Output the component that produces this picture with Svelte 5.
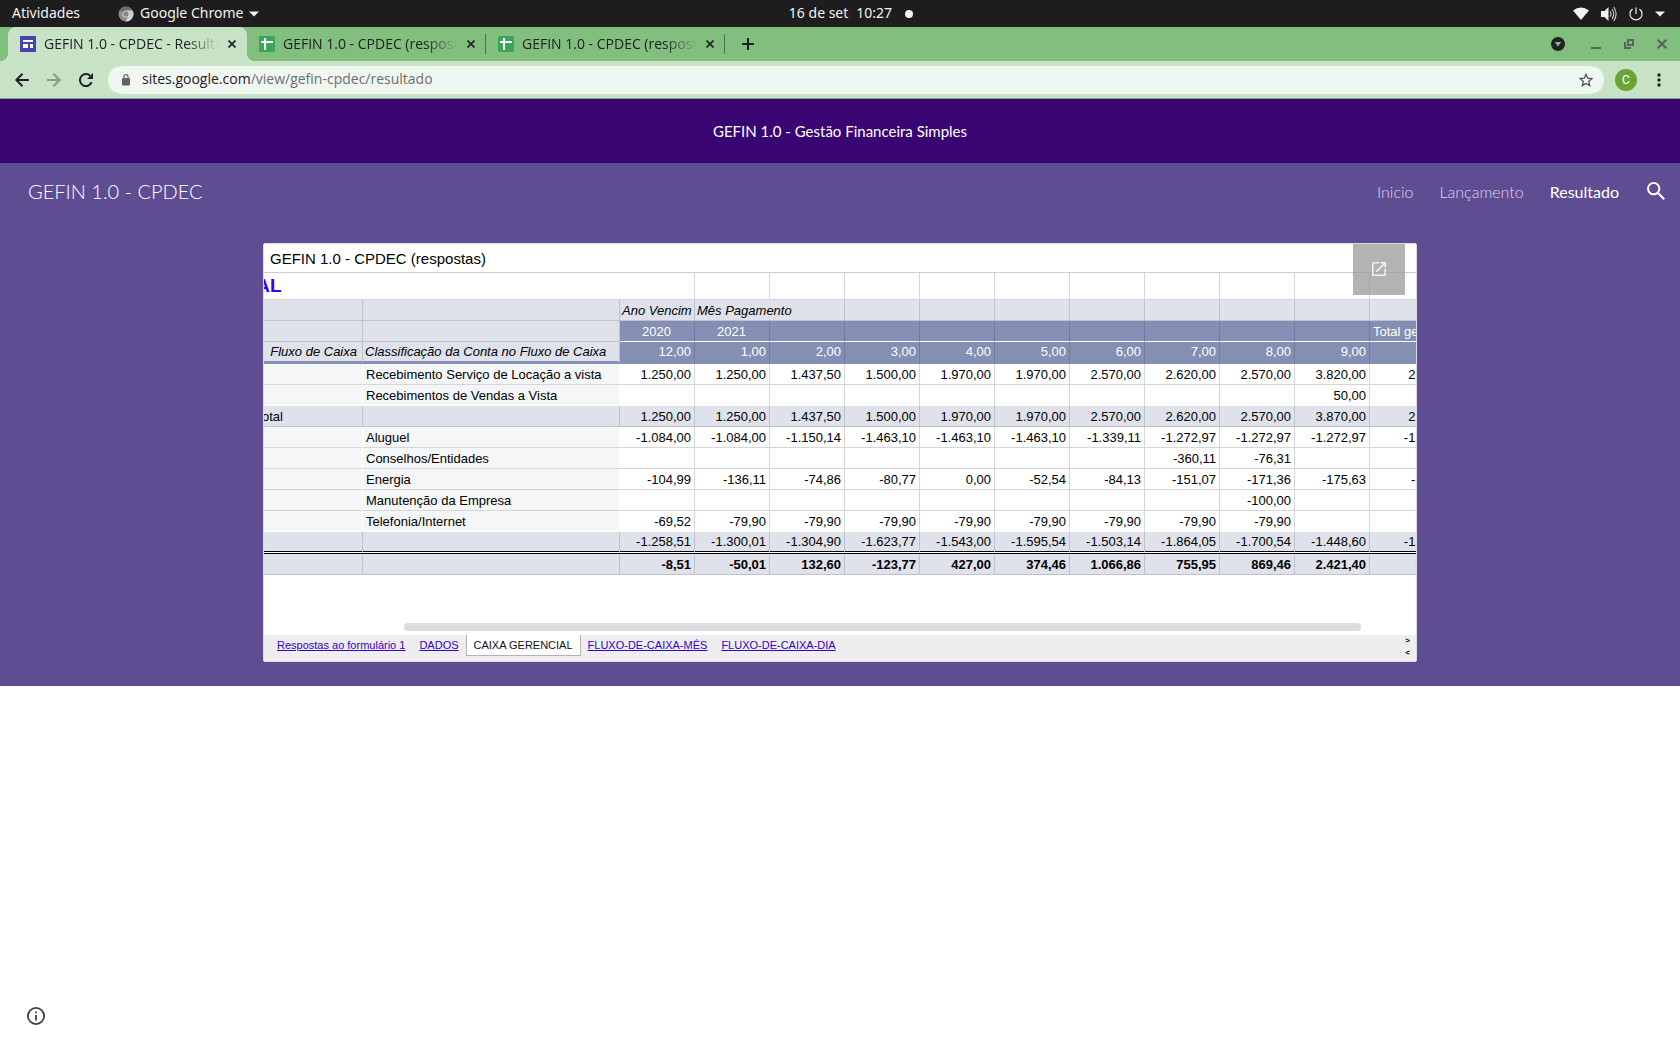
<script>
  const tabs = [
    { title: 'GEFIN 1.0 - CPDEC - Resultado', kind: 'sites', active: true },
    { title: 'GEFIN 1.0 - CPDEC (respostas)', kind: 'sheets', active: false },
    { title: 'GEFIN 1.0 - CPDEC (respostas)', kind: 'sheets', active: false }
  ];

  const blank = Array(11).fill('');
  const rows = [
    { kind: 'item', group: '', label: 'Recebimento Serviço de Locação a vista', values: ['1.250,00', '1.250,00', '1.437,50', '1.500,00', '1.970,00', '1.970,00', '2.570,00', '2.620,00', '2.570,00', '3.820,00', '20.957,50'] },
    { kind: 'item last', group: '', label: 'Recebimentos de Vendas a Vista', values: ['', '', '', '', '', '', '', '', '', '50,00', '50,00'] },
    { kind: 'sum', group: 'Total', label: '', values: ['1.250,00', '1.250,00', '1.437,50', '1.500,00', '1.970,00', '1.970,00', '2.570,00', '2.620,00', '2.570,00', '3.870,00', '21.007,50'] },
    { kind: 'item', group: '', label: 'Aluguel', values: ['-1.084,00', '-1.084,00', '-1.150,14', '-1.463,10', '-1.463,10', '-1.463,10', '-1.339,11', '-1.272,97', '-1.272,97', '-1.272,97', '-12.865,46'] },
    { kind: 'item', group: '', label: 'Conselhos/Entidades', values: ['', '', '', '', '', '', '', '-360,11', '-76,31', '', '-436,42'] },
    { kind: 'item', group: '', label: 'Energia', values: ['-104,99', '-136,11', '-74,86', '-80,77', '0,00', '-52,54', '-84,13', '-151,07', '-171,36', '-175,63', '-1.031,46'] },
    { kind: 'item', group: '', label: 'Manutenção da Empresa', values: ['', '', '', '', '', '', '', '', '-100,00', '', '-100,00'] },
    { kind: 'item last', group: '', label: 'Telefonia/Internet', values: ['-69,52', '-79,90', '-79,90', '-79,90', '-79,90', '-79,90', '-79,90', '-79,90', '-79,90', '', '-708,72'] },
    { kind: 'sum double', group: '', label: '', values: ['-1.258,51', '-1.300,01', '-1.304,90', '-1.623,77', '-1.543,00', '-1.595,54', '-1.503,14', '-1.864,05', '-1.700,54', '-1.448,60', '-15.142,06'] },
    { kind: 'sum grand', group: '', label: '', values: ['-8,51', '-50,01', '132,60', '-123,77', '427,00', '374,46', '1.066,86', '755,95', '869,46', '2.421,40', '5.865,44'] }
  ];
  const years = ['2020', '2021', '', '', '', '', '', '', '', '', 'Total geral'];
  const months = ['12,00', '1,00', '2,00', '3,00', '4,00', '5,00', '6,00', '7,00', '8,00', '9,00', ''];
  const sheets = ['Respostas ao formulário 1', 'DADOS', 'CAIXA GERENCIAL', 'FLUXO-DE-CAIXA-MÊS', 'FLUXO-DE-CAIXA-DIA'];
  const current = 'CAIXA GERENCIAL';
</script>

<div class="desktop">
  <div class="topbar">
    <div class="top-left">
      <button class="activities">Atividades</button>
      <button class="app-menu">
        <svg width="16" height="16" viewBox="0 0 16 16">
          <circle cx="8" cy="8" r="7.5" fill="#8c8c8c" />
          <path d="M8 8 1.6 4.2A7.5 7.5 0 0 1 14.5 4.4H8z" fill="#6e6e6e" />
          <path d="M14.5 4.4A7.5 7.5 0 0 1 7.5 15.5L11 9.5 9 4.4z" fill="#d0d0d0" />
          <circle cx="8" cy="8" r="3.6" fill="#e0e0e0" />
          <circle cx="8" cy="8" r="2.7" fill="#858585" />
        </svg>
        <span>Google Chrome</span>
        <svg width="10" height="6" viewBox="0 0 10 6"><path d="M0 .5h10L5 5.5z" fill="#f2f2f2" /></svg>
      </button>
    </div>
    <button class="clock"><span>16 de set</span><span>10:27</span><i></i></button>
    <div class="top-right">
      <svg width="16" height="14" viewBox="0 0 16 14"><path d="M0 3.6Q8-2.4 16 3.6L8 13z" fill="#f2f2f2" /></svg>
      <svg width="16" height="16" viewBox="0 0 16 16">
        <path d="M0 5h3.500l4-4v14l-4-4H0z" fill="#f2f2f2" />
        <path d="M9 5.200q2 2.800 0 5.600M11 3q3.500 5 0 10M12.800 1q4.600 7 0 14" fill="none" stroke="#cfcfcf" stroke-width="1.100" />
      </svg>
      <svg width="14" height="14" viewBox="0 0 14 14" fill="none" stroke="#f2f2f2" stroke-width="1.200"><path d="M3.600 2a6 6 0 1 0 6.800 0M7 .5V7" /></svg>
      <svg width="10" height="6" viewBox="0 0 10 6"><path d="M0 .5h10L5 5.500z" fill="#f2f2f2" /></svg>
    </div>
  </div>

  <div class="tabstrip">
    {#each tabs as tab}
      <div class="tab" class:active={tab.active}>
        {#if tab.kind === 'sites'}
          <svg width="16" height="16" viewBox="0 0 16 16"><path d="M0 0h16v16H0z" fill="#4a41b5" /><path d="M3 4h10v2H3zM3 8h5v4H3zM10 8h3v4h-3z" fill="#fff" /></svg>
        {:else}
          <svg width="16" height="16" viewBox="0 0 16 16"><rect width="16" height="16" rx="1.500" fill="#3aa45b" /><path d="M5 2h2v3h7v2H7v7H5V7H2V5h3z" fill="#fff" /></svg>
        {/if}
        <span class="tab-title">{tab.title}</span>
        <button class="tab-close" aria-label="Fechar guia">
          <svg width="8" height="8" viewBox="0 0 8 8"><path d="M.5.5l7 7M7.500.500l-7 7" stroke="#202124" stroke-width="1.600" /></svg>
        </button>
      </div>
    {/each}
    <button class="new-tab" aria-label="Nova guia">
      <svg width="12" height="12" viewBox="0 0 12 12"><path d="M6 0v12M0 6h12" stroke="#202124" stroke-width="2" /></svg>
    </button>
    <div class="window-controls">
      <button aria-label="Pesquisar guias"><svg width="14" height="14" viewBox="0 0 14 14"><circle cx="7" cy="7" r="7" fill="#202124" /><path d="M3.800 5h6.400L7 9.500z" fill="#82be7d" /></svg></button>
      <button aria-label="Minimizar"><svg width="10" height="12" viewBox="0 0 10 12"><path d="M0 9h10v2H0z" fill="#5b6060" /></svg></button>
      <button aria-label="Restaurar"><svg width="10" height="10" viewBox="0 0 10 10" fill="none" stroke="#5b6060" stroke-width="2"><path d="M4 1h5v5H4zM1 3v6h6" /></svg></button>
      <button aria-label="Fechar"><svg width="10" height="10" viewBox="0 0 10 10"><path d="M.7.7l8.600 8.600M9.300.7L.7 9.300" stroke="#5b6060" stroke-width="2" /></svg></button>
    </div>
  </div>

  <div class="toolbar">
    <button class="nav" aria-label="Voltar"><svg width="14" height="14" viewBox="0 0 14 14" fill="none" stroke="#202124" stroke-width="2"><path d="M14 7H1.500M7.500.8L1.400 7l6.100 6.200" /></svg></button>
    <button class="nav" aria-label="Avançar"><svg width="14" height="14" viewBox="0 0 14 14" fill="none" stroke="#879a86" stroke-width="2"><path d="M0 7h12.500M6.500.8L12.600 7l-6.100 6.200" /></svg></button>
    <button class="nav" aria-label="Recarregar"><svg width="14" height="14" viewBox="0 0 14 14"><path d="M12.600 9.200A6 6 0 1 1 11.200 2.800" fill="none" stroke="#202124" stroke-width="2" /><path d="M14 0v6H8z" fill="#202124" /></svg></button>
    <div class="omnibox">
      <svg width="8" height="12" viewBox="0 0 8 12"><rect y="4" width="8" height="7.500" rx="1" fill="#5f6368" /><path d="M2 4.500V2.700a2 2 0 0 1 4 0v1.800" fill="none" stroke="#5f6368" stroke-width="1.200" /></svg>
      <a class="url" href="#resultado"><b>sites.google.com</b>/view/gefin-cpdec/resultado</a>
      <button class="star" aria-label="Favoritar"><svg width="14" height="14" viewBox="0 0 14 14"><path d="M7 1.300l1.700 3.900 4.200.4-3.200 2.800 1 4.200L7 10.400l-3.700 2.200 1-4.200L1.100 5.600l4.200-.4z" fill="none" stroke="#50555a" stroke-width="1.300" /></svg></button>
    </div>
    <button class="avatar" aria-label="Perfil">C</button>
    <button class="menu" aria-label="Menu"><svg width="4" height="14" viewBox="0 0 4 14" fill="#202124"><circle cx="2" cy="2" r="1.700" /><circle cx="2" cy="7" r="1.700" /><circle cx="2" cy="12" r="1.700" /></svg></button>
  </div>

  <div class="page">
    <div class="banner">GEFIN 1.0 - Gestão Financeira Simples</div>
    <div class="hero">
      <header>
        <a class="brand" href="#inicio">GEFIN 1.0 - CPDEC</a>
        <nav>
          <a href="#inicio">Inicio</a>
          <a href="#lancamento">Lançamento</a>
          <a class="here" href="#resultado">Resultado</a>
        </nav>
        <button class="search" aria-label="Pesquisar"><svg width="18" height="18" viewBox="3 3 17.500 17.500"><path fill="#fff" d="M15.500 14h-.79l-.28-.27A6.471 6.471 0 0 0 16 9.500 6.500 6.500 0 1 0 9.500 16c1.610 0 3.090-.59 4.230-1.570l.27.28v.79l5 4.990L20.490 19l-4.990-5zm-6 0C7.010 14 5 11.990 5 9.500S7.010 5 9.500 5 14 7.010 14 9.500 11.990 14 9.500 14z" /></svg></button>
      </header>

      <section class="embed">
        <div class="doc-title">GEFIN 1.0 - CPDEC (respostas)</div>
        <div class="grid-view">
          <table>
            <colgroup>
              <col class="c-group" /><col class="c-label" />
              {#each months.slice(0, 10) as _}<col class="c-month" />{/each}
              <col class="c-total" />
            </colgroup>
            <tbody>
              <tr class="title"><td colspan="3">CAIXA GERENCIAL</td>{#each blank.slice(1) as _}<td></td>{/each}</tr>
              <tr class="fields">
                <td></td><td></td><td>Ano Vencim</td><td colspan="2">Mês Pagamento</td>
                {#each blank.slice(3) as _}<td></td>{/each}
              </tr>
              <tr class="years">
                <td></td><td></td>
                {#each years as year}<td class="blue">{year}</td>{/each}
              </tr>
              <tr class="months">
                <td class="head end">Fluxo de Caixa</td><td class="head">Classificação da Conta no Fluxo de Caixa</td>
                {#each months as month}<td class="blue">{month}</td>{/each}
              </tr>
              {#each rows as row}
                <tr class={row.kind}>
                  <td class="name group">{row.group}</td><td class="name">{row.label}</td>
                  {#each row.values as value}<td class="num">{value}</td>{/each}
                </tr>
              {/each}
            </tbody>
          </table>
        </div>
        <div class="scroll-track"><div class="thumb"></div></div>
        <div class="sheet-bar">
          <div class="sheet-tabs">
            {#each sheets as sheet}
              {#if sheet === current}
                <span class="sheet current">{sheet}</span>
              {:else}
                <a class="sheet" href="#planilha">{sheet}</a>
              {/if}
            {/each}
          </div>
          <div class="steps"><button>&gt;</button><button>&lt;</button></div>
        </div>
        <a class="open" href="#abrir" aria-label="Abrir em nova janela"><svg width="14" height="14" viewBox="3 3 18 18"><path fill="#f1f1f1" d="M19 19H5V5h7V3H5a2 2 0 0 0-2 2v14a2 2 0 0 0 2 2h14c1.100 0 2-.9 2-2v-7h-2v7zM14 3v2h3.590l-9.830 9.830 1.410 1.410L19 6.410V10h2V3h-7z" /></svg></a>
      </section>
    </div>
    <div class="rest">
      <button class="info" aria-label="Informações"><svg width="18" height="18" viewBox="2 2 20 20"><path fill="#3c4043" d="M11 7h2v2h-2zm0 4h2v6h-2zm1-9a10 10 0 1 0 0 20 10 10 0 0 0 0-20zm0 18a8 8 0 1 1 0-16 8 8 0 0 1 0 16z" /></svg></button>
    </div>
  </div>
</div>

<style>
  :global(body) { margin: 0; background: #fff; }
  .desktop { min-height: 100vh; display: flex; flex-direction: column; font-family: "Noto Sans", sans-serif; overflow: hidden; }
  button { border: 0; padding: 0; background: none; font: inherit; color: inherit; display: flex; align-items: center; justify-content: center; }
  svg { display: block; flex: none; }
  a { color: inherit; text-decoration: none; }

  .topbar { display: grid; grid-template-columns: 1fr auto 1fr; align-items: center; height: 27px; background: #1d1d1d; color: #f2f2f2; font-size: 14px; }
  .top-left { display: flex; gap: 38px; padding-left: 12px; }
  .app-menu { gap: 6px; }
  .clock { gap: 8px; padding-left: 22px; }
  .clock i { width: 8px; height: 8px; border-radius: 50%; background: #f2f2f2; margin-left: 5px; }
  .topbar span, .activities { line-height: 18px; padding-bottom: 1px; }
  .top-right { display: flex; justify-content: flex-end; align-items: center; gap: 12px; padding-right: 15px; }

  .tabstrip { display: flex; height: 34px; padding-left: 8px; background: #82be7d; color: #202124; font-family: "Open Sans", sans-serif; font-size: 14px; }
  .tab { position: relative; display: flex; align-items: center; box-sizing: border-box; width: 239px; padding: 0 7px 0 12px; }
  .tab:not(.active)::after { content: ""; position: absolute; right: 0; top: 7px; width: 1px; height: 20px; background: #4d704b; }
  .tab.active { background: #c8e2c5; border-radius: 8px 8px 0 0; }
  .tab.active::before, .tab.active::after { content: ""; position: absolute; bottom: 0; width: 8px; height: 8px; }
  .tab.active::before { left: -8px; background: radial-gradient(circle at 0 0, #82be7d 8px, #c8e2c5 8px); }
  .tab.active::after { right: -8px; background: radial-gradient(circle at 100% 0, #82be7d 8px, #c8e2c5 8px); }
  .tab-title { flex: 1; min-width: 0; margin: 0 6px 0 8px; padding-bottom: 1px; line-height: 20px; white-space: nowrap; overflow: hidden; mask-image: linear-gradient(to right, #000 calc(100% - 32px), transparent); }
  .tab-close { width: 16px; height: 16px; }
  .new-tab { width: 46px; }
  .window-controls { margin-left: auto; display: flex; align-items: center; gap: 23px; padding-right: 13px; }
  .window-controls button:first-child { margin-right: 3px; }

  .toolbar { display: flex; align-items: center; height: 37px; padding: 0 10px 0 6px; background: #c8e2c5; border-bottom: 1px solid #84a082; }
  .nav { width: 32px; height: 32px; }
  .omnibox { flex: 1; display: flex; align-items: center; height: 28px; margin: 0 11px 0 6px; padding: 0 11px 0 14px; border-radius: 14px; background: #f0f7f0; }
  .url { flex: 1; margin-left: 12px; padding-bottom: 2px; font-family: "Open Sans", sans-serif; font-size: 14px; line-height: 20px; color: #6a706f; }
  .url b { font-weight: 400; color: #202124; }
  .avatar { width: 22px; height: 22px; border-radius: 50%; background: #6aa434; color: #fff; font: 12px Roboto, sans-serif; }
  .menu { width: 22px; height: 28px; margin-left: 11px; }

  .page { flex: 1; display: flex; flex-direction: column; font-family: Lato, sans-serif; }
  .banner { padding: 20px; background: #380573; color: #fff; font-size: 15px; line-height: 24px; text-align: center; }
  .hero { background: #5f4d93; padding-bottom: 24px; }
  header { display: flex; align-items: center; height: 56px; padding: 0 15px 0 28px; margin-bottom: 24px; color: #fff; }
  .brand { margin-right: auto; font-size: 20px; font-weight: 300; }
  nav { display: flex; gap: 26px; margin-right: 28px; font-size: 16px; font-weight: 300; color: #dcd6ea; }
  .here { font-weight: 400; color: #fff; }

  .embed { position: relative; box-sizing: border-box; width: min(1154px, 100% - 48px); margin: 0 auto; border: 1px solid #dcdce0; border-radius: 2px; background: #fff; overflow: hidden; font-family: "Liberation Sans", sans-serif; color: #000; }
  .doc-title { height: 28px; padding-left: 6px; border-bottom: 1px solid #ccc; font-size: 15px; line-height: 30px; }
  .grid-view { overflow: hidden; }
  table { width: 1307px; margin-left: -101px; table-layout: fixed; border-collapse: separate; border-spacing: 0; font-size: 13px; line-height: 16px; }
  .c-group { width: 200px; }
  .c-label { width: 257px; }
  .c-month { width: 75px; }
  .c-total { width: 100px; }
  td { box-sizing: border-box; height: 21px; padding: 2px 3px 1px 2px; border-right: 1px solid #d6d6d6; border-bottom: 1px solid #d6d6d6; vertical-align: bottom; white-space: nowrap; overflow: hidden; }
  .title td { height: 27px; }
  .title td:first-child { padding: 0 0 1px 0; font-size: 19px; line-height: 24px; font-weight: 700; color: #30f; text-indent: -57px; }
  .fields td, .years td, .months td { background: #dfe2eb; border-color: #bfc2cc; }
  .fields td, .months .head { font-style: italic; }
  .years .blue, .months .blue { background: #8490b3; color: #fff; border-right-color: #717c9d; }
  .years .blue { text-align: center; border-bottom-color: #fff; }
  .years .blue:last-child { text-align: left; padding-left: 3px; }
  .months td { height: 22px; border-bottom: 3px solid #8490b3; }
  .months .blue { text-align: right; }
  .months .end { text-align: right; padding-right: 5px; }
  .num { text-align: right; }
  .item .name { background: #f4f6f8; border-right-color: #fff; padding-left: 3px; }
  .item.last td { border-bottom-color: #fff; }
  .sum td { background: #dfe2eb; border-color: #bfc2cc; }
  .sum .group { text-align: right; padding-right: 79px; }
  .double td { height: 22px; border-bottom: 3px double #000; background-clip: padding-box; }
  .grand td { font-weight: 700; }

  .scroll-track { padding: 48px 55px 4px 140px; }
  .thumb { height: 8px; border-radius: 4px; background: #dadce0; }
  .sheet-bar { display: flex; justify-content: space-between; height: 26px; background: #eee; font-size: 11px; line-height: 20px; }
  .sheet-tabs { display: flex; padding-left: 6px; height: 21px; }
  .sheet { padding: 0 7px; color: #30c; text-decoration: underline; }
  .current { border: 1px solid #b3b3b3; border-top: 0; background: #fff; color: #111; text-decoration: none; }
  .steps { display: flex; flex-direction: column; justify-content: space-around; padding: 0 6px 2px 0; font-size: 8px; line-height: 10px; font-weight: 700; }
  .open { position: absolute; top: -1px; right: 11px; width: 52px; height: 52px; display: flex; align-items: center; justify-content: center; background: rgba(153, 153, 153, 0.75); }

  .rest { flex: 1; display: flex; align-items: flex-end; padding: 0 0 25px 27px; }
</style>
